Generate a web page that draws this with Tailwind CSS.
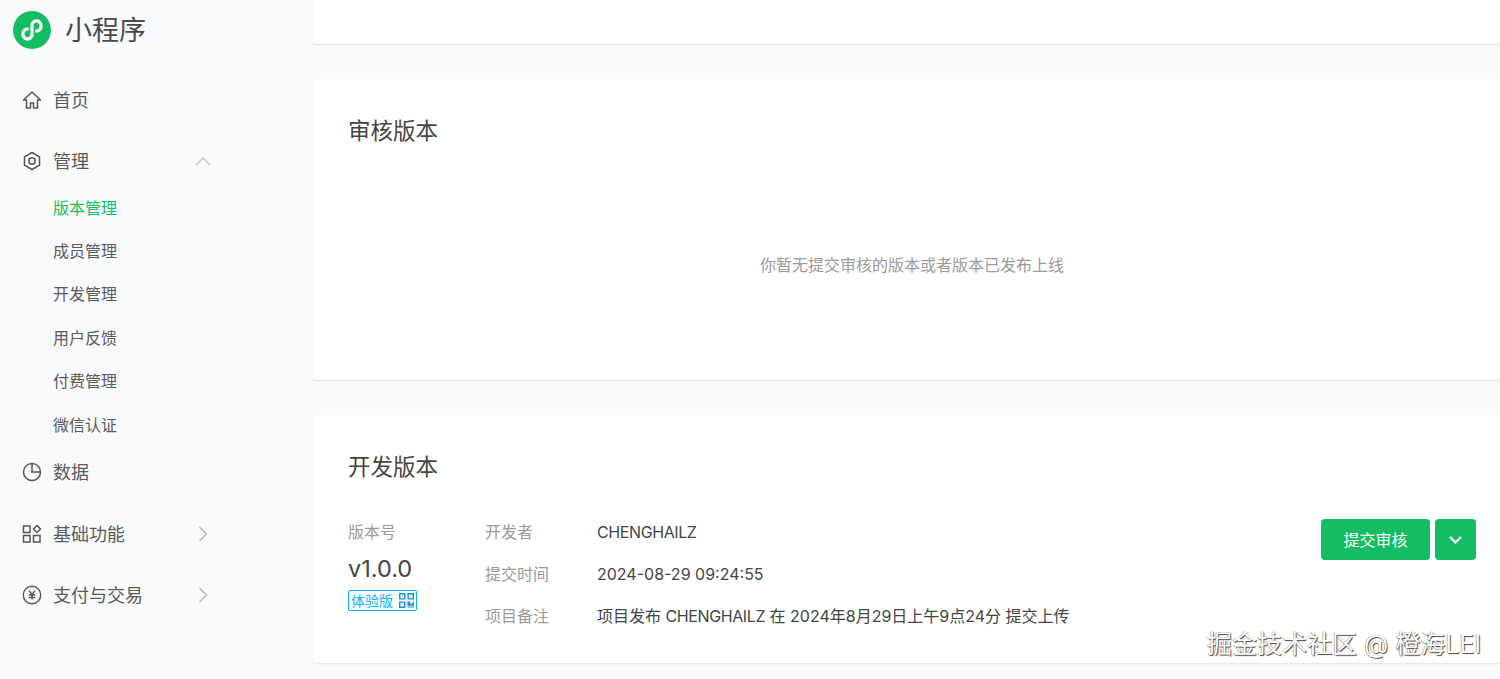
<!DOCTYPE html>
<html lang="zh-CN">
<head>
  <meta charset="UTF-8" />
  <title>小程序</title>
  <script src="https://cdn.jsdelivr.net/npm/@tailwindcss/browser@4"></script>
</head>
<body class="bg-[#f9fafc] text-[#353535] font-['Inter','Noto_Sans_CJK_SC',sans-serif] overflow-hidden">
  <div class="relative flex h-[679px] w-[1500px] overflow-hidden">
    <!-- sidebar -->
    <aside class="w-[313px] shrink-0 text-[#5a5a5a]">
      <div class="flex h-[69px] items-start pl-[13px] pt-[11px]">
        <svg class="h-[38px] w-[38px]" viewBox="0 0 38 38">
          <circle cx="19" cy="19" r="19" fill="#15bd62" />
          <path d="M10 22.500a4.600 4.600 0 1 0 9 0v-7a4.600 4.600 0 1 1 9 0c0 2.600-2 4.400-4.400 4.600M14.400 18c-2.400.2-4.400 2-4.400 4.500" fill="none" stroke="#fff" stroke-width="3.200" stroke-linecap="round" />
        </svg>
        <span class="ml-[14px] mt-[1px] text-[27px] leading-[38px] text-[#4a4a4a]">小程序</span>
      </div>
      <nav>
        <a class="flex h-[62px] items-center pl-[22px] pr-[102px] text-[18px]">
          <svg class="mr-[11px] h-[20px] w-[20px]" viewBox="0 0 20 20" fill="none" stroke="#555" stroke-width="1.500" stroke-linejoin="round"><path d="M1.500 10 10 2l8.500 8h-3v8h-4v-5h-3v5h-4v-8z" /></svg>
          首页
        </a>
        <a class="-mt-[1px] flex h-[62px] items-center pl-[22px] pr-[102px] text-[18px]">
          <svg class="mr-[11px] h-[20px] w-[20px]" viewBox="0 0 20 20" fill="none" stroke="#555" stroke-width="1.500" stroke-linejoin="round"><path d="M10 1.500 17.500 5.800v8.400L10 18.500l-7.500-4.300V5.800z" /><circle cx="10" cy="10" r="3.200" /></svg>
          管理
          <svg class="ml-auto h-[10px] w-[16px]" viewBox="0 0 16 10" fill="none" stroke="#c4c4c4" stroke-width="1.400"><path d="M1 9l7-7 7 7" /></svg>
        </a>
        <ul class="-mt-[6px] pl-[53px] text-[16px]">
          <li class="flex h-[43.400px] items-center text-[#15bd62]">版本管理</li>
          <li class="flex h-[43.400px] items-center">成员管理</li>
          <li class="flex h-[43.400px] items-center">开发管理</li>
          <li class="flex h-[43.400px] items-center">用户反馈</li>
          <li class="flex h-[43.400px] items-center">付费管理</li>
          <li class="flex h-[43.400px] items-center">微信认证</li>
        </ul>
        <a class="-mt-[5px] flex h-[62px] items-center pl-[22px] text-[18px]">
          <svg class="mr-[11px] h-[20px] w-[20px]" viewBox="0 0 20 20" fill="none" stroke="#555" stroke-width="1.500"><circle cx="10" cy="10" r="8.500" /><path d="M10 1.500V10h8.500" /></svg>
          数据
        </a>
        <a class="flex h-[62px] items-center pl-[22px] pr-[105px] text-[18px]">
          <svg class="mr-[11px] h-[20px] w-[20px]" viewBox="0 0 20 20" fill="none" stroke="#555" stroke-width="1.500"><rect x="1.500" y="2" width="6.500" height="6.500" /><rect x="1.500" y="11.500" width="6.500" height="6.500" /><rect x="11.500" y="11.500" width="6.500" height="6.500" /><path d="m15 1.500 3.500 3.500-3.500 3.500L11.500 5z" /></svg>
          基础功能
          <svg class="ml-auto h-[16px] w-[10px]" viewBox="0 0 10 16" fill="none" stroke="#b5b5b5" stroke-width="1.400"><path d="m1.500 1 7 7-7 7" /></svg>
        </a>
        <a class="-mt-[1px] flex h-[62px] items-center pl-[22px] pr-[105px] text-[18px]">
          <svg class="mr-[11px] h-[20px] w-[20px]" viewBox="0 0 20 20" fill="none" stroke="#555" stroke-width="1.400"><circle cx="10" cy="10" r="8.700" /><path d="m7 5.800 3 3.700 3-3.700M6.800 10h6.400M6.800 12.500h6.400M10 9.500v5" /></svg>
          支付与交易
          <svg class="ml-auto h-[16px] w-[10px]" viewBox="0 0 10 16" fill="none" stroke="#b5b5b5" stroke-width="1.400"><path d="m1.500 1 7 7-7 7" /></svg>
        </a>
      </nav>
    </aside>

    <!-- main -->
    <main class="min-w-0 flex-1">
      <div class="h-[44px] rounded-b-[4px] bg-white shadow-[0_1px_2px_rgba(0,0,0,0.1)]"></div>

      <section class="mt-[35px] h-[301px] rounded-[4px] bg-white pl-[35px] pt-[36px] shadow-[0_1px_2px_rgba(0,0,0,0.1)]">
        <h2 class="text-[22.500px] leading-[32px] font-normal text-[#444]">审核版本</h2>
        <p class="mt-[106px] pl-[412px] text-[16px] leading-[24px] text-[#9a9a9a]">你暂无提交审核的版本或者版本已发布上线</p>
      </section>

      <section class="mt-[35px] h-[248px] rounded-[4px] bg-white pl-[35px] pr-[24px] pt-[36px] shadow-[0_1px_2px_rgba(0,0,0,0.1)]">
        <h2 class="text-[22.500px] leading-[32px] font-normal text-[#444]">开发版本</h2>
        <div class="mt-[37px] flex items-start">
          <div class="w-[137px]">
            <div class="text-[16px] leading-[24px] text-[#9a9a9a]">版本号</div>
            <div class="mt-[10px] text-[23.500px] leading-[30px] text-[#444]">v1.0.0</div>
            <div class="mt-[6px] flex h-[21px] w-[69px] items-center justify-between rounded-[2px] border border-[#10aeff] pl-[2px] pr-[2px] text-[14px] text-[#10aeff]">
              体验版
              <svg class="h-[15px] w-[15px]" viewBox="0 0 16 16" fill="#1a8fd0"><path d="M0 0h7v7H0zm1.500 1.500v4h4v-4zM9 0h7v7H9zm1.500 1.500v4h4v-4zM0 9h7v7H0zm1.500 1.500v4h4v-4zM9 9h3v2.500h2.500V9H16v4.500H9zm0 5.500h7v1H9zM3 3h1v1H3zm9 0h1v1h-1zm-9 9h1v1H3z" fill-rule="evenodd" /></svg>
            </div>
          </div>
          <dl class="flex-1 text-[16px] leading-[24px]">
            <div class="flex h-[42px]"><dt class="w-[112px] text-[#9a9a9a]">开发者</dt><dd class="tracking-[-0.400px] text-[#444]">CHENGHAILZ</dd></div>
            <div class="flex h-[42px]"><dt class="w-[112px] text-[#9a9a9a]">提交时间</dt><dd class="text-[#444]">2024-08-29 09:24:55</dd></div>
            <div class="flex h-[42px]"><dt class="w-[112px] text-[#9a9a9a]">项目备注</dt><dd class="text-[#444]">项目发布 <span class="tracking-[-0.400px]">CHENGHAILZ</span> 在 2024年8月29日上午9点24分 提交上传</dd></div>
          </dl>
          <div class="-mt-[1px] flex gap-[5px]">
            <button class="h-[41px] w-[109px] rounded-[4px] bg-[#15bd62] text-[16px] text-white">提交审核</button>
            <button class="flex h-[41px] w-[41px] items-center justify-center rounded-[4px] bg-[#15bd62]">
              <svg class="h-[8px] w-[13px]" viewBox="0 0 13 8" fill="none" stroke="#fff" stroke-width="2"><path d="m1 1 5.500 5.500L12 1" /></svg>
            </button>
          </div>
        </div>
      </section>
    </main>

    <!-- watermark -->
    <div class="absolute left-[1207px] top-[628px] whitespace-nowrap text-[25px] leading-[32px] text-white [text-shadow:1px_1px_1px_#444,-0.5px_-0.5px_0.5px_#777]">掘金技术社区 @ 橙海LEI</div>
  </div>
</body>
</html>
